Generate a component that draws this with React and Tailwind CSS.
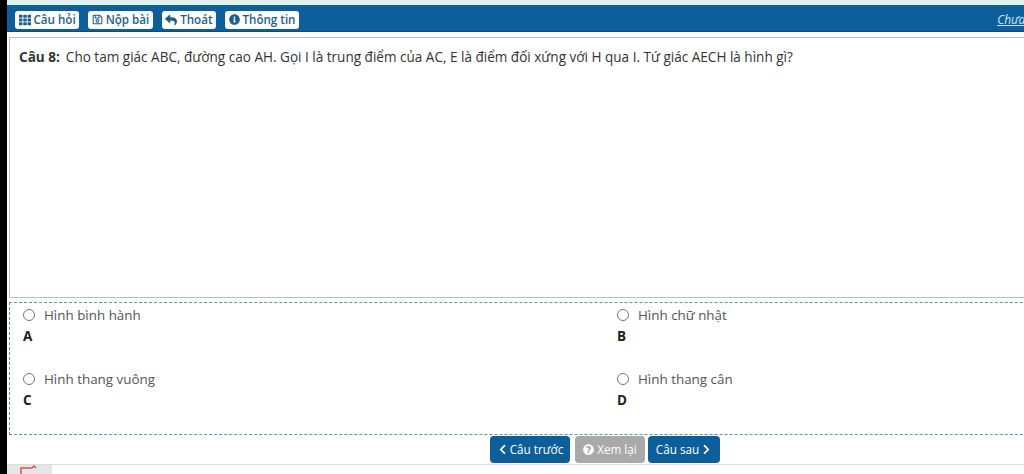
import { FaTh, FaRegSave, FaReply, FaInfoCircle, FaChevronLeft, FaChevronRight, FaQuestionCircle } from 'react-icons/fa';

const topButtons = [
  { label: 'Câu hỏi', icon: <FaTh className="w-[12px] h-[12px]" /> },
  { label: 'Nộp bài', icon: <FaRegSave className="w-[11px] h-[11px]" /> },
  { label: 'Thoát', icon: <FaReply className="w-[12px] h-[12px]" /> },
  { label: 'Thông tin', icon: <FaInfoCircle className="w-[11px] h-[11px]" /> },
];

const answers = [
  { key: 'A', text: 'Hình bình hành' },
  { key: 'B', text: 'Hình chữ nhật' },
  { key: 'C', text: 'Hình thang vuông' },
  { key: 'D', text: 'Hình thang cân' },
];

export default function App() {
  return (
    <div className="w-[1024px] h-[474px] overflow-hidden flex bg-white font-['Open_Sans',sans-serif] text-[13px] text-[#333]">
      <div className="w-[7px] shrink-0 bg-black" />
      {/* page is wider than the window and gets clipped on the right */}
      <div className="w-[1196px] shrink-0 flex flex-col">
        <div className="h-[5px] bg-[#dff1f1]" />

        {/* Top toolbar */}
        <div className="h-[27px] bg-[#0d5f9b] border-b border-[#0a4c7c] flex items-center justify-between pl-[8px] pr-[134px] pt-[3px]">
          <div className="flex items-center gap-[9px]">
            {topButtons.map(b => (
              <button key={b.label} className="h-[18px] px-[3.5px] bg-white rounded-[3px] flex items-center gap-[3px] text-[11.6px] font-semibold text-[#1c5f8f] whitespace-nowrap">
                {b.icon}
                {b.label}
              </button>
            ))}
          </div>
          <span className="text-[12px] italic underline text-[#cfe6f5] whitespace-nowrap">Chưa nộp bài</span>
        </div>

        {/* Question */}
        <div className="mt-[5px] ml-[2px] h-[261px] border border-[#b8bfc4] px-[9px] py-[9px] text-[13.55px] leading-[20px] whitespace-nowrap">
          <b className="font-bold mr-[6px]">Câu 8:</b>
          Cho tam giác ABC, đường cao AH. Gọi I là trung điểm của AC, E là điểm đối xứng với H qua I. Tứ giác AECH là hình gì?
        </div>

        {/* Answers */}
        <div className="mt-[4px] ml-[2px] h-[133px] border border-dashed border-[#5a9aa8] grid grid-cols-[594px_1fr] content-start pl-[13px] pt-[1px]">
          {answers.map(a => (
            <div key={a.key} className="h-[64px]">
              <label className="h-[20px] mt-[1px] flex items-center gap-[9px] text-[13.4px] text-[#555]">
                <span className="w-[12px] h-[12px] rounded-full border border-[#777] bg-white" />
                {a.text}
              </label>
              <div className="mt-[1px] h-[20px] leading-[20px] text-[13.5px] font-bold text-[#222]">{a.key}</div>
            </div>
          ))}
        </div>

        {/* Nav buttons */}
        <div className="h-[28px] flex items-end justify-center">
          <button className="h-[27px] w-[80px] mr-[5px] rounded-[4px] bg-[#0d5f9b] text-white text-[11.7px] flex items-center justify-center gap-[2px]">
            <FaChevronLeft className="w-[11px] h-[11px]" />Câu trước
          </button>
          <button className="h-[27px] w-[70px] mr-[3px] rounded-[4px] bg-[#a9a9a9] text-white text-[11.7px] flex items-center justify-center gap-[3px]">
            <FaQuestionCircle className="w-[11px] h-[11px]" />Xem lại
          </button>
          <button className="h-[27px] w-[72px] rounded-[4px] bg-[#0d5f9b] text-white text-[11.7px] flex items-center justify-center gap-[2px]">
            Câu sau<FaChevronRight className="w-[11px] h-[11px]" />
          </button>
        </div>

        {/* Clipped bottom tab bar */}
        <div className="h-[10px] mt-[1px] border-t border-[#ddd] flex">
          <div className="w-[45px] h-full bg-[#e6e6e6] pl-[13px]">
            <svg width="18" height="10" viewBox="0 0 18 10"><path d="M1 9V3h11l2-2 2 2" fill="none" stroke="#d9534f" strokeWidth="1.5" /></svg>
          </div>
        </div>
      </div>
    </div>
  );
}
